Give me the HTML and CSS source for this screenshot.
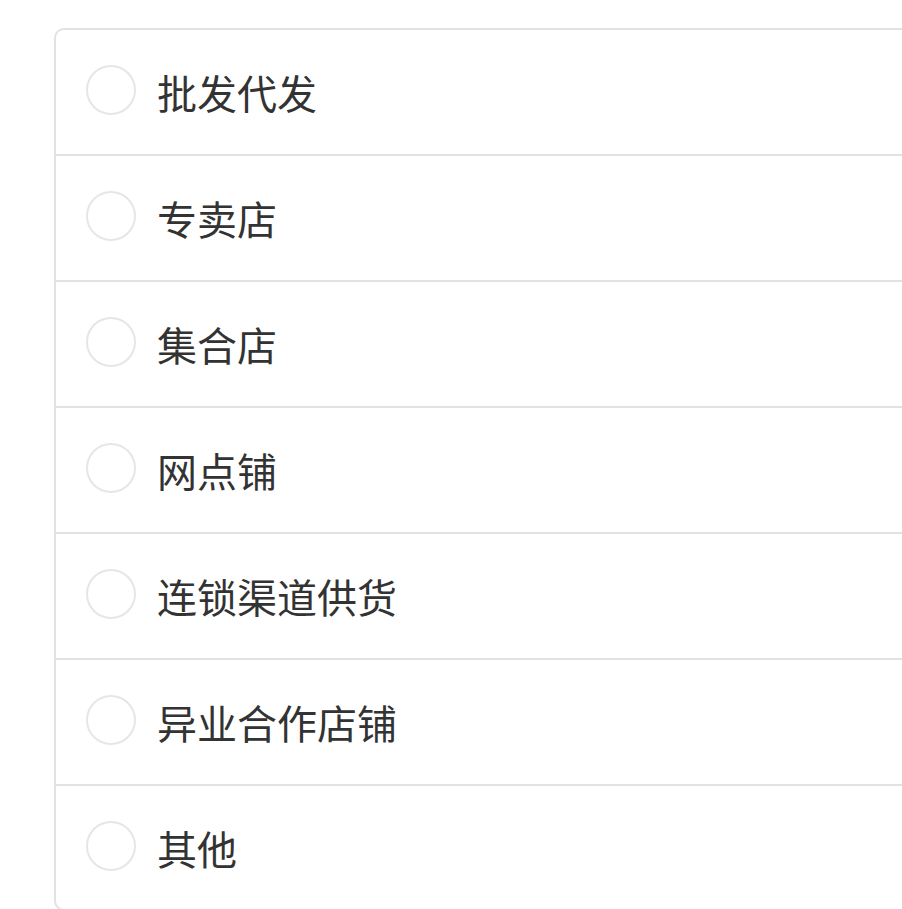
FILE: index.html
```html
<!DOCTYPE html>
<html lang="zh-CN">
<head>
<meta charset="utf-8">
<title>选项</title>
<link rel="stylesheet" href="styles.css">
</head>
<body>
<div class="card">
  <div class="row"><span class="radio"></span><span class="label">批发代发</span></div>
  <div class="row"><span class="radio"></span><span class="label">专卖店</span></div>
  <div class="row"><span class="radio"></span><span class="label">集合店</span></div>
  <div class="row"><span class="radio"></span><span class="label">网点铺</span></div>
  <div class="row"><span class="radio"></span><span class="label">连锁渠道供货</span></div>
  <div class="row"><span class="radio"></span><span class="label">异业合作店铺</span></div>
  <div class="row"><span class="radio"></span><span class="label">其他</span></div>
</div>
</body>
</html>
```
FILE: styles.css
```css
html, body {
  margin: 0;
  padding: 0;
  background: #ffffff;
  overflow: hidden;
}
body {
  padding: 28px 0 0 54px;
  font-family: "Noto Sans CJK SC", "Noto Sans", sans-serif;
  color: #333333;
}
.card {
  border: 2px solid #e2e2e2;
  border-right: none;
  border-radius: 10px 0 0 10px;
  background: #ffffff;
}
.row {
  display: flex;
  align-items: center;
  height: 124px;
  padding-left: 30px;
  border-bottom: 2px solid #e2e2e2;
}
.row:last-child {
  border-bottom: none;
  height: 123px;
}
.radio {
  width: 46px;
  height: 46px;
  border: 2px solid #e6e6e6;
  border-radius: 50%;
  flex: none;
  margin-top: -4px;
}
.label {
  margin-left: 21px;
  font-size: 40px;
  line-height: 1;
  color: #333333;
}
```
